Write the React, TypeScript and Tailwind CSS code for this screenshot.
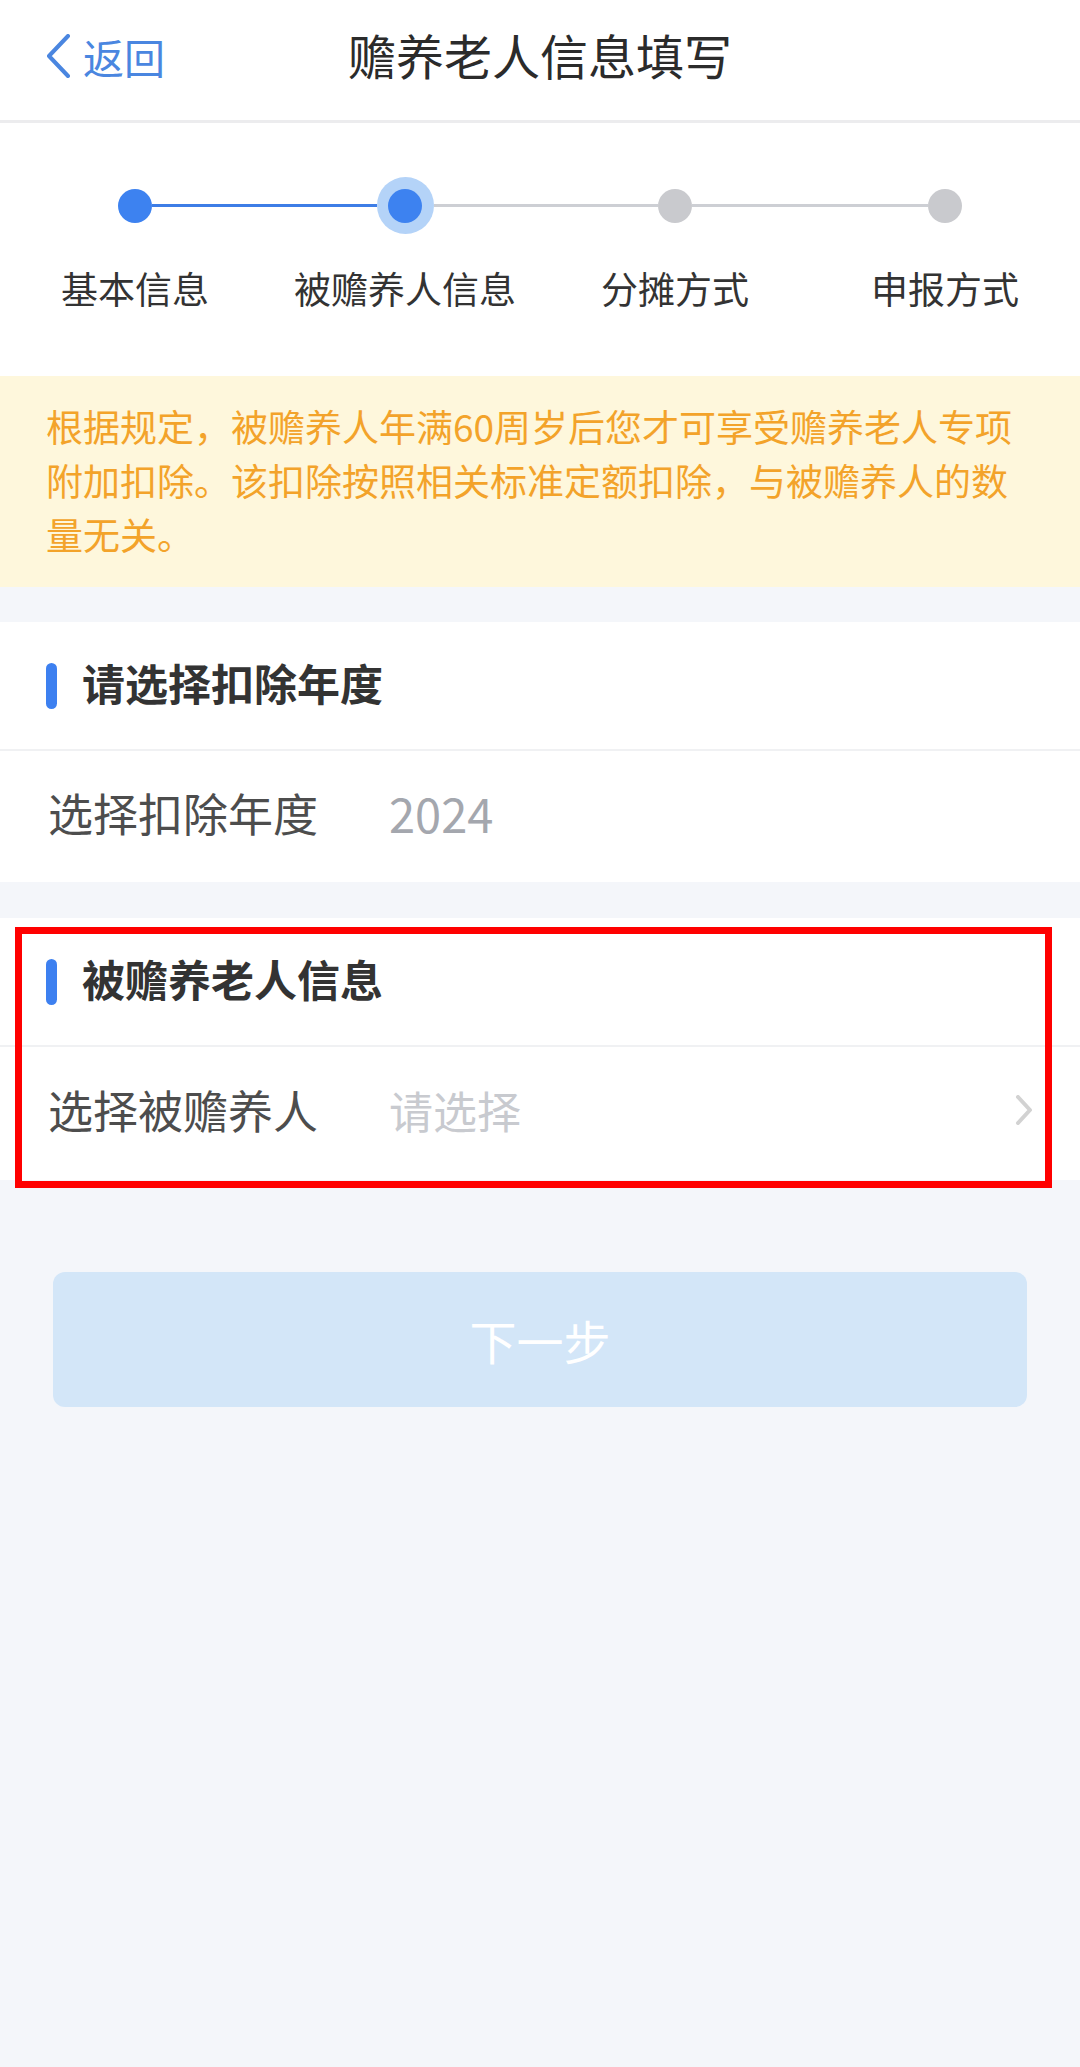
import React from 'react';

const steps = [
    { label: '基本信息', state: 'done' },
    { label: '被赡养人信息', state: 'active' },
    { label: '分摊方式', state: 'todo' },
    { label: '申报方式', state: 'todo' },
];

const BackIcon = () => (
    <svg width="26" height="44" viewBox="0 0 26 44" fill="none">
        <polyline points="23,2 4,22 23,42" stroke="#4a86e0" strokeWidth="4" strokeLinecap="round" strokeLinejoin="round" />
    </svg>
);

const ChevronRight = () => (
    <svg width="18" height="30" viewBox="0 0 18 30" fill="none">
        <polyline points="3,2 15,15 3,28" stroke="#d2d2d2" strokeWidth="4" strokeLinecap="round" strokeLinejoin="round" />
    </svg>
);

const SectionTitle: React.FC<{ title: string }> = ({ title }) => (
    <div className="h-[129px] flex items-center pl-[46px] border-b-2 border-[#f0f1f3]">
        <div className="w-[11px] h-[46px] rounded-full bg-[#3d80f0]" />
        <span className="ml-[25px] -mt-[6px] text-[43px] leading-none font-bold text-[#333333]">{title}</span>
    </div>
);

const App: React.FC = () => {
    return (
        <div className="min-h-[2067px] bg-[#f4f6fa] font-['Noto_Sans_CJK_SC','Noto_Sans',sans-serif]">
            {/* header */}
            <div className="relative h-[123px] bg-white border-b-[3px] border-[#ececee] flex items-center justify-center">
                <div className="absolute left-[45px] top-[34px] flex items-center">
                    <BackIcon />
                    <span className="ml-[12px] text-[41px] leading-none text-[#4a86e0]">返回</span>
                </div>
                <span className="text-[48px] leading-none text-[#2b2b2b] -mt-[12px]">赡养老人信息填写</span>
            </div>

            {/* stepper */}
            <div className="bg-white pt-[54px] pb-[66px] grid grid-cols-4">
                {steps.map((step, i) => {
                    const leftColor = i === 0 ? 'bg-transparent' : i === 1 ? 'bg-[#3d7de6]' : 'bg-[#cdcfd4]';
                    const rightColor = i === 3 ? 'bg-transparent' : i === 0 ? 'bg-[#3d7de6]' : 'bg-[#cdcfd4]';
                    return (
                        <div key={step.label} className="flex flex-col items-center">
                            <div className="w-full h-[57px] flex items-center">
                                <div className={`flex-1 h-[3px] ${leftColor}`} />
                                {step.state === 'active' ? (
                                    <div className="w-[57px] h-[57px] rounded-full bg-[#b4d3f8] flex items-center justify-center">
                                        <div className="w-[34px] h-[34px] rounded-full bg-[#3d82f0]" />
                                    </div>
                                ) : (
                                    <div className={`w-[34px] h-[34px] rounded-full ${step.state === 'done' ? 'bg-[#3d82f0]' : 'bg-[#c9cace]'}`} />
                                )}
                                <div className={`flex-1 h-[3px] ${rightColor}`} />
                            </div>
                            <span className="mt-[32px] text-[37px] leading-[44px] text-[#333333]">{step.label}</span>
                        </div>
                    );
                })}
            </div>

            {/* notice */}
            <div className="bg-[#fef7dc] px-[46px] pt-[23px] pb-[26px] text-[37px] leading-[54px] text-[#f3a32a]">
                根据规定，被赡养人年满60周岁后您才可享受赡养老人专项附加扣除。该扣除按照相关标准定额扣除，与被赡养人的数量无关。
            </div>

            {/* year */}
            <div className="mt-[35px] bg-white">
                <SectionTitle title="请选择扣除年度" />
                <div className="h-[131px] flex items-center pl-[48px] pb-[8px]">
                    <span className="w-[341px] text-[45px] leading-none text-[#4d4d4d]">选择扣除年度</span>
                    <span className="text-[47px] leading-none text-[#a4a7ae]">2024</span>
                </div>
            </div>

            {/* elder */}
            <div className="relative mt-[36px]">
                <div className="bg-white">
                    <SectionTitle title="被赡养老人信息" />
                    <div className="h-[133px] flex items-center pl-[48px] pr-[47px] pb-[8px]">
                        <span className="w-[341px] text-[45px] leading-none text-[#4d4d4d]">选择被赡养人</span>
                        <span className="flex-1 text-[44px] leading-none text-[#c8cacf]">请选择</span>
                        <ChevronRight />
                    </div>
                </div>
                <div className="absolute left-[15px] right-[28px] top-[9px] -bottom-[8px] border-[7px] border-[#ff0000]" />
            </div>

            {/* next */}
            <div className="px-[53px] pt-[92px]">
                <div className="h-[135px] rounded-[12px] bg-[#d3e6f8] flex items-center justify-center">
                    <span className="text-[47px] leading-none text-white">下一步</span>
                </div>
            </div>
        </div>
    );
};

export default App;
